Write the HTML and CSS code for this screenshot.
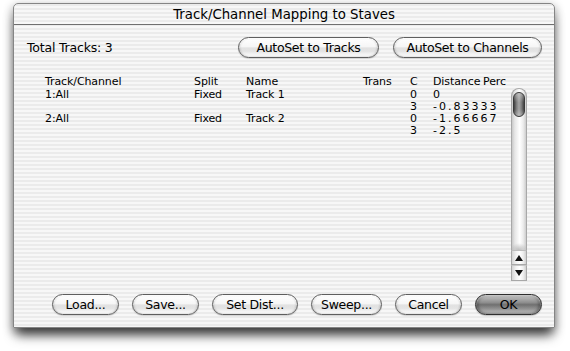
FILE: index.html
```html
<!DOCTYPE html>
<html>
<head>
<meta charset="utf-8">
<title>Track/Channel Mapping to Staves</title>
<link rel="stylesheet" href="styles.css">
</head>
<body>
<div class="window">
  <div class="titlebar">Track/Channel Mapping to Staves</div>
  <div class="toprow">
    <span class="total">Total Tracks: 3</span>
    <div class="topbtns">
      <button class="btn w140">AutoSet to Tracks</button>
      <button class="btn w148">AutoSet to Channels</button>
    </div>
  </div>
  <div class="listarea">
    <div class="list">
      <div class="row head">
        <span>Track/Channel</span><span>Split</span><span>Name</span><span>Trans</span><span>C</span><span>Distance</span><span>Perc</span>
      </div>
      <div class="row">
        <span>1:All</span><span>Fixed</span><span>Track 1</span><span></span><span>0</span><span class="num">0</span><span></span>
      </div>
      <div class="row">
        <span></span><span></span><span></span><span></span><span>3</span><span class="num">-0.83333</span><span></span>
      </div>
      <div class="row">
        <span>2:All</span><span>Fixed</span><span>Track 2</span><span></span><span>0</span><span class="num">-1.66667</span><span></span>
      </div>
      <div class="row">
        <span></span><span></span><span></span><span></span><span>3</span><span class="num">-2.5</span><span></span>
      </div>
    </div>
    <div class="scrollbar">
      <div class="track"><div class="thumb"></div></div>
      <div class="arrow up"><svg width="8" height="6" viewBox="0 0 8 6"><polygon points="4,0 8,6 0,6" fill="#111"/></svg></div>
      <div class="arrow down"><svg width="8" height="6" viewBox="0 0 8 6"><polygon points="0,0 8,0 4,6" fill="#111"/></svg></div>
    </div>
  </div>
  <div class="bottomrow">
    <button class="btn w67">Load...</button>
    <button class="btn w67">Save...</button>
    <button class="btn w86">Set Dist...</button>
    <button class="btn w71">Sweep...</button>
    <button class="btn w67">Cancel</button>
    <button class="btn w67 default">OK</button>
  </div>
</div>
</body>
</html>
```

FILE: styles.css
```css
html, body {
  margin: 0;
  padding: 0;
  background: #ffffff;
  width: 570px;
  height: 351px;
  overflow: hidden;
}

body {
  padding-top: 3px;
  padding-left: 13px;
  box-sizing: border-box;
  font-family: "DejaVu Sans", "Liberation Sans", sans-serif;
  color: #000;
}

.window {
  width: 542px;
  height: 325px;
  box-sizing: border-box;
  border: 1px solid #858585;
  border-radius: 5px 5px 0 0;
  background: repeating-linear-gradient(to bottom, #ebebeb 0px, #ebebeb 2px, #f7f7f7 2px, #f7f7f7 4px);
  box-shadow: 0 10px 12px -3px rgba(0, 0, 0, 0.7), 0 3px 10px 1px rgba(0, 0, 0, 0.3);
  display: flex;
  flex-direction: column;
}

.titlebar {
  height: 20px;
  line-height: 21px;
  border-bottom: 1px solid #6f6f6f;
  text-align: center;
  font-size: 13.3px;
  border-radius: 4px 4px 0 0;
}

.toprow {
  display: flex;
  align-items: center;
  justify-content: space-between;
  margin-top: 12px;
  padding: 0 12px 0 13px;
  height: 21px;
}

.total {
  font-size: 12.5px;
  letter-spacing: -0.2px;
}

.topbtns {
  display: flex;
  gap: 14px;
}

.btn {
  height: 21px;
  box-sizing: border-box;
  border: 1px solid #5e5e5e;
  border-radius: 11px;
  padding: 0;
  margin: 0;
  font-family: "DejaVu Sans", "Liberation Sans", sans-serif;
  font-size: 12.5px;
  letter-spacing: -0.3px;
  color: #000;
  line-height: 19px;
  text-align: center;
  background:
    linear-gradient(to bottom, rgba(255,255,255,0) 55%, rgba(255,255,255,0.9) 100%),
    linear-gradient(to bottom, #ffffff 0%, #f6f6f6 45%, #e4e4e4 52%, #d8d8d8 70%, #e8e8e8 100%);
  box-shadow: inset 0 1px 1px rgba(255,255,255,0.9), inset 1px 0 2px rgba(0,0,0,0.15), inset -1px 0 2px rgba(0,0,0,0.15), 0 1px 1px rgba(0,0,0,0.15);
}

.btn.default {
  border-color: #2e2e2e;
  background:
    linear-gradient(to bottom, rgba(255,255,255,0) 50%, rgba(200,200,200,0.7) 100%),
    linear-gradient(to bottom, #c8c8c8 0%, #8e8e8e 40%, #6e6e6e 52%, #7a7a7a 75%, #a8a8a8 100%);
  box-shadow: inset 0 1px 2px rgba(255,255,255,0.6), inset 2px 0 3px rgba(0,0,0,0.35), inset -2px 0 3px rgba(0,0,0,0.35), 0 1px 1px rgba(0,0,0,0.2);
}

.w140 { width: 141px; }
.w148 { width: 149px; }
.w67 { width: 67px; }
.w71 { width: 71px; }
.w86 { width: 86px; }

.listarea {
  display: flex;
  align-items: flex-start;
  margin-top: 18px;
  padding-left: 30px;
  gap: 4px;
}

.list {
  width: 463px;
  font-size: 11px;
  letter-spacing: -0.1px;
}

.row {
  display: grid;
  grid-template-columns: 149px 52px 117px 47px 23px 50px 1fr;
  width: 453px;
  box-sizing: border-box;
  padding-left: 1px;
  height: 12px;
  line-height: 12px;
  white-space: nowrap;
  overflow: hidden;
}

.row.head {
  height: 13px;
  line-height: 12px;
  overflow: visible;
}

.num {
  letter-spacing: 2px;
}

.scrollbar {
  margin-top: 12px;
  width: 16px;
  height: 193px;
  display: flex;
  flex-direction: column;
}

.track {
  flex: 1;
  box-sizing: border-box;
  border: 1px solid #a8a8a8;
  border-bottom: none;
  border-radius: 8px 8px 0 0;
  background:
    radial-gradient(ellipse 9px 7px at 50% 100%, rgba(150,150,150,0.6), rgba(150,150,150,0) 100%),
    linear-gradient(to right, #c9c9c9 0%, #e6e6e6 20%, #f8f8f8 45%, #ffffff 55%, #ececec 80%, #cdcdcd 100%);
  display: flex;
  flex-direction: column;
  align-items: center;
}

.thumb {
  margin-top: 3px;
  width: 12px;
  height: 25px;
  box-sizing: border-box;
  border: 1px solid #3a3a3a;
  border-radius: 6px;
  background:
    linear-gradient(to bottom, rgba(255,255,255,0.35), rgba(255,255,255,0) 40%, rgba(255,255,255,0) 70%, rgba(255,255,255,0.3)),
    linear-gradient(to right, #404040 0%, #7c7c7c 25%, #a6a6a6 50%, #7c7c7c 75%, #404040 100%);
}

.arrow {
  height: 15px;
  box-sizing: border-box;
  border: 1px solid #a8a8a8;
  border-top-color: #bdbdbd;
  background: linear-gradient(to right, #d4d4d4 0%, #f2f2f2 30%, #ffffff 55%, #eeeeee 80%, #d0d0d0 100%);
  display: flex;
  align-items: center;
  justify-content: center;
}

.arrow.down {
  border-top: 1px solid #c8c8c8;
  height: 16px;
}

.arrow svg {
  display: block;
}

.bottomrow {
  margin-top: auto;
  margin-bottom: 12px;
  display: flex;
  justify-content: flex-end;
  gap: 13px;
  padding-right: 12px;
}
```
